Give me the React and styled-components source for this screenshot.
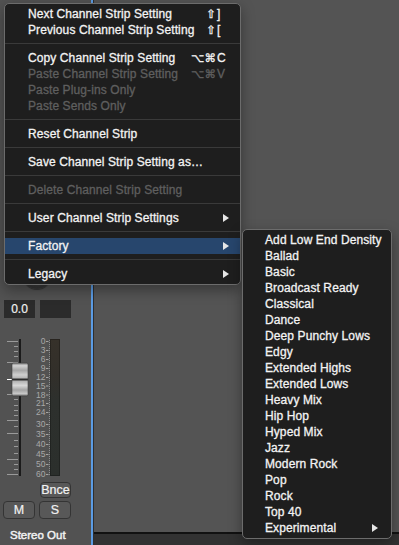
import React from 'react';
import styled, { createGlobalStyle } from 'styled-components';

const GlobalStyle = createGlobalStyle`
  html, body {
    margin: 0;
    padding: 0;
    background: #535353;
  }
  body {
    font-family: "Liberation Sans", "DejaVu Sans", Arial, sans-serif;
    -webkit-font-smoothing: antialiased;
  }
`;

const mainMenu = [
	{ label: 'Next Channel Strip Setting', mods: '⇧', keyName: ']' },
	{ label: 'Previous Channel Strip Setting', mods: '⇧', keyName: '[' },
	'sep',
	{ label: 'Copy Channel Strip Setting', mods: '⌥⌘', keyName: 'C' },
	{ label: 'Paste Channel Strip Setting', mods: '⌥⌘', keyName: 'V', disabled: true },
	{ label: 'Paste Plug-ins Only', disabled: true },
	{ label: 'Paste Sends Only', disabled: true },
	'sep',
	{ label: 'Reset Channel Strip' },
	'sep',
	{ label: 'Save Channel Strip Setting as…' },
	'sep',
	{ label: 'Delete Channel Strip Setting', disabled: true },
	'sep',
	{ label: 'User Channel Strip Settings', submenu: true },
	'sep',
	{ label: 'Factory', submenu: true, active: true },
	'sep',
	{ label: 'Legacy', submenu: true },
];

const factory = [
	'Add Low End Density',
	'Ballad',
	'Basic',
	'Broadcast Ready',
	'Classical',
	'Dance',
	'Deep Punchy Lows',
	'Edgy',
	'Extended Highs',
	'Extended Lows',
	'Heavy Mix',
	'Hip Hop',
	'Hyped Mix',
	'Jazz',
	'Modern Rock',
	'Pop',
	'Rock',
	'Top 40',
];

// scale drawings start 4px above the fader track
const TOP = 4;

// meter scale: label -> y below the top of the track
const meterMarks = [
	['0', 2], ['3', 11], ['6', 20], ['9', 29], ['12', 38], ['15', 46.5],
	['18', 55.5], ['21', 64], ['24', 73], ['30', 85], ['35', 95], ['40', 105],
	['45', 115], ['50', 125], ['60', 135],
];

// fader ticks: [y, long]
const faderTicks = [
	[2, true], [7, false], [12, false], [17, false], [23, true],
	[55, true], [60, false], [66, false], [71, false], [76, false], [81, true],
	[87, false], [94, true], [101, false], [107, false], [114, false],
	[120, true], [125, false], [130, false], [135, true],
];

function FaderScale() {
	return (
		<svg width="30" height="146" viewBox="0 0 30 146">
			<defs>
				<linearGradient id="cap" x1="0" y1="0" x2="0" y2="1">
					<stop offset="0" stopColor="#7c7c7c" />
					<stop offset="0.08" stopColor="#d2d2d2" />
					<stop offset="0.22" stopColor="#a6a6a6" />
					<stop offset="0.36" stopColor="#cfcfcf" />
					<stop offset="0.46" stopColor="#b4b4b4" />
					<stop offset="0.48" stopColor="#2c2c2c" />
					<stop offset="0.52" stopColor="#2c2c2c" />
					<stop offset="0.54" stopColor="#b0b0b0" />
					<stop offset="0.68" stopColor="#d8d8d8" />
					<stop offset="0.82" stopColor="#a4a4a4" />
					<stop offset="0.93" stopColor="#c8c8c8" />
					<stop offset="1" stopColor="#6c6c6c" />
				</linearGradient>
			</defs>
			<g transform={`translate(0 ${TOP})`}>
				{faderTicks.map(([y, long]) => (
					<rect key={y} x={long ? 7 : 14} y={y} width={long ? 11 : 4} height="1" fill="#9a9a9a" />
				))}
				<rect x="19" y="0" width="2" height="137" fill="#1b1b1b" />
				<rect x="7" y="40" width="6" height="1" fill="#ffffff" />
				<rect x="12" y="24" width="16" height="33" rx="1.5" fill="url(#cap)" stroke="#3c3c3c" strokeWidth="0.6" />
			</g>
		</svg>
	);
}

function MeterScale() {
	const dots = [];
	for (let y = 1; y < 137; y += 2) dots.push(y);
	return (
		<svg width="20" height="146" viewBox="0 0 20 146">
			<g transform={`translate(0 ${TOP})`}>
				{meterMarks.map(([label, y]) => (
					<g key={label}>
						<text
							x="15.5"
							y={y + 3}
							textAnchor="end"
							fontSize="8.5"
							fontFamily="Liberation Sans, Arial, sans-serif"
							fill="#a8a8a8"
						>
							{label}
						</text>
						<rect x="16" y={y} width="2.5" height="1" fill="#a4a4a4" />
					</g>
				))}
				{dots.map((y) => (
					<rect key={y} x="19" y={y} width="1" height="1" fill="#8c8c8c" />
				))}
			</g>
		</svg>
	);
}

function App() {
	return (
		<Screen>
			<GlobalStyle />
			<Strip>
				<KnobArea>
					<Knob />
				</KnobArea>
				<ValueRow>
					<ValueBox>0.0</ValueBox>
					<ValueBox />
				</ValueRow>
				<FaderRow>
					<FaderScale />
					<MeterScale />
					<MeterBar />
				</FaderRow>
				<BnceRow>
					<StripButton $height={16}>Bnce</StripButton>
				</BnceRow>
				<MuteSoloRow>
					<StripButton $width={32}>M</StripButton>
					<StripButton $width={32}>S</StripButton>
				</MuteSoloRow>
				<StripName>Stereo Out</StripName>
			</Strip>
			<BlueRule />
			<Main>
				<Canvas />
				<Footer />
			</Main>

			<Menu>
				{mainMenu.map((item, i) =>
					item === 'sep' ? (
						<Separator key={i} />
					) : (
						<MenuRow key={i} $active={item.active} $disabled={item.disabled}>
							<Label>{item.label}</Label>
							{item.keyName && (
								<Shortcut>
									<Mods>{item.mods}</Mods>
									<KeyName>{item.keyName}</KeyName>
								</Shortcut>
							)}
							{item.submenu && <Arrow />}
						</MenuRow>
					)
				)}
			</Menu>

			<SubMenu>
				{factory.map((name) => (
					<SubRow key={name}>
						<Label>{name}</Label>
					</SubRow>
				))}
				<SubRow>
					<Label>Experimental</Label>
					<Arrow />
				</SubRow>
			</SubMenu>
		</Screen>
	);
}

export default App;

const Screen = styled.div`
	position: relative;
	display: flex;
	width: 399px;
	height: 545px;
	overflow: hidden;
	background: #535353;
`;

const Strip = styled.div`
	display: flex;
	flex-direction: column;
	width: 91px;
	flex-shrink: 0;
	background: #525252;
`;

const KnobArea = styled.div`
	display: flex;
	justify-content: flex-start;
	height: 28px;
	padding: 261px 0 0 23px;
`;

const Knob = styled.div`
	width: 28px;
	height: 28px;
	border-radius: 50%;
	background: radial-gradient(circle at 50% 40%, #4a4a4a 0%, #3a3a3a 60%, #2c2c2c 100%);
	box-shadow: 0 1px 1px rgba(0, 0, 0, 0.4);
`;

const ValueRow = styled.div`
	display: flex;
	gap: 5px;
	margin-top: 11px;
	padding-left: 4px;
`;

const ValueBox = styled.div`
	width: 31px;
	height: 18px;
	background: #2b2b2b;
	color: #f0f0f0;
	font-size: 12px;
	line-height: 18px;
	text-align: center;
	-webkit-text-stroke: 0.2px currentColor;
`;

const FaderRow = styled.div`
	display: flex;
	align-items: flex-start;
	margin-top: 17px;
	height: 143px;
`;

const MeterBar = styled.div`
	width: 10px;
	height: 137px;
	margin-top: 4px;
	background: linear-gradient(180deg, #36312a 0%, #322f2a 25%, #2d302d 45%, #2b2f2c 100%);
	box-shadow: inset 0 0 0 1px rgba(0, 0, 0, 0.25);
`;

const BnceRow = styled.div`
	display: flex;
	margin-top: 4px;
	padding-left: 40px;
`;

const MuteSoloRow = styled.div`
	display: flex;
	gap: 4px;
	margin-top: 3px;
	padding-left: 3px;
`;

const StripButton = styled.div`
	box-sizing: border-box;
	width: ${(p) => p.$width || 31}px;
	height: ${(p) => p.$height || 18}px;
	border: 1px solid #343434;
	border-radius: 4px;
	background: #585858;
	color: #f2f2f2;
	font-size: 12.5px;
	line-height: ${(p) => (p.$height || 18) - 2}px;
	text-align: center;
	-webkit-text-stroke: 0.2px currentColor;
`;

const StripName = styled.div`
	margin-top: 8px;
	padding-left: 10px;
	color: #f2f2f2;
	font-size: 11.5px;
	line-height: 16px;
	-webkit-text-stroke: 0.45px currentColor;
`;

const BlueRule = styled.div`
	width: 2px;
	flex-shrink: 0;
	background: #5b9be3;
	border-right: 1px solid #2e2e2e;
`;

const Main = styled.div`
	display: flex;
	flex-direction: column;
	flex: 1;
`;

const Canvas = styled.div`
	flex: 1;
	background: #545454;
`;

const Footer = styled.div`
	height: 11px;
	border-top: 2px solid #111111;
	background: #323232;
`;

const Menu = styled.div`
	position: absolute;
	left: 4px;
	top: 3px;
	box-sizing: border-box;
	width: 237px;
	padding: 2px 0;
	border: 1px solid #6c6c6c;
	border-radius: 5px;
	background: #1e1e1e;
	box-shadow: 0 5px 14px rgba(0, 0, 0, 0.35);
	font-size: 12px;
`;

const SubMenu = styled(Menu)`
	left: 242px;
	top: 229px;
	width: 150px;
`;

const Separator = styled.div`
	height: 1px;
	margin: 5px 0 6px;
	background: #3a3a3a;
`;

const MenuRow = styled.div`
	display: flex;
	align-items: center;
	height: 16px;
	padding: 0 11px 0 23px;
	background: ${(p) => (p.$active ? '#27466d' : 'transparent')};
	color: ${(p) => (p.$disabled ? '#5f5f5f' : '#f3f3f3')};
	line-height: 16px;
	white-space: nowrap;
	-webkit-text-stroke: 0.3px currentColor;
`;

const SubRow = styled(MenuRow)`
	padding: 0 13px 0 22px;
`;

const Label = styled.span`
	flex: 1;
	letter-spacing: 0.1px;
`;

const Shortcut = styled.span`
	display: flex;
	align-items: center;
`;

const Mods = styled.span`
	text-align: right;
	font-family: "DejaVu Sans", sans-serif;
	font-size: 11.5px;
`;

const KeyName = styled.span`
	width: 12px;
	padding-left: 1px;
	font-size: 12px;
`;

const Arrow = styled.span`
	width: 0;
	height: 0;
	border-left: 6px solid #e6e6e6;
	border-top: 4px solid transparent;
	border-bottom: 4px solid transparent;
`;
